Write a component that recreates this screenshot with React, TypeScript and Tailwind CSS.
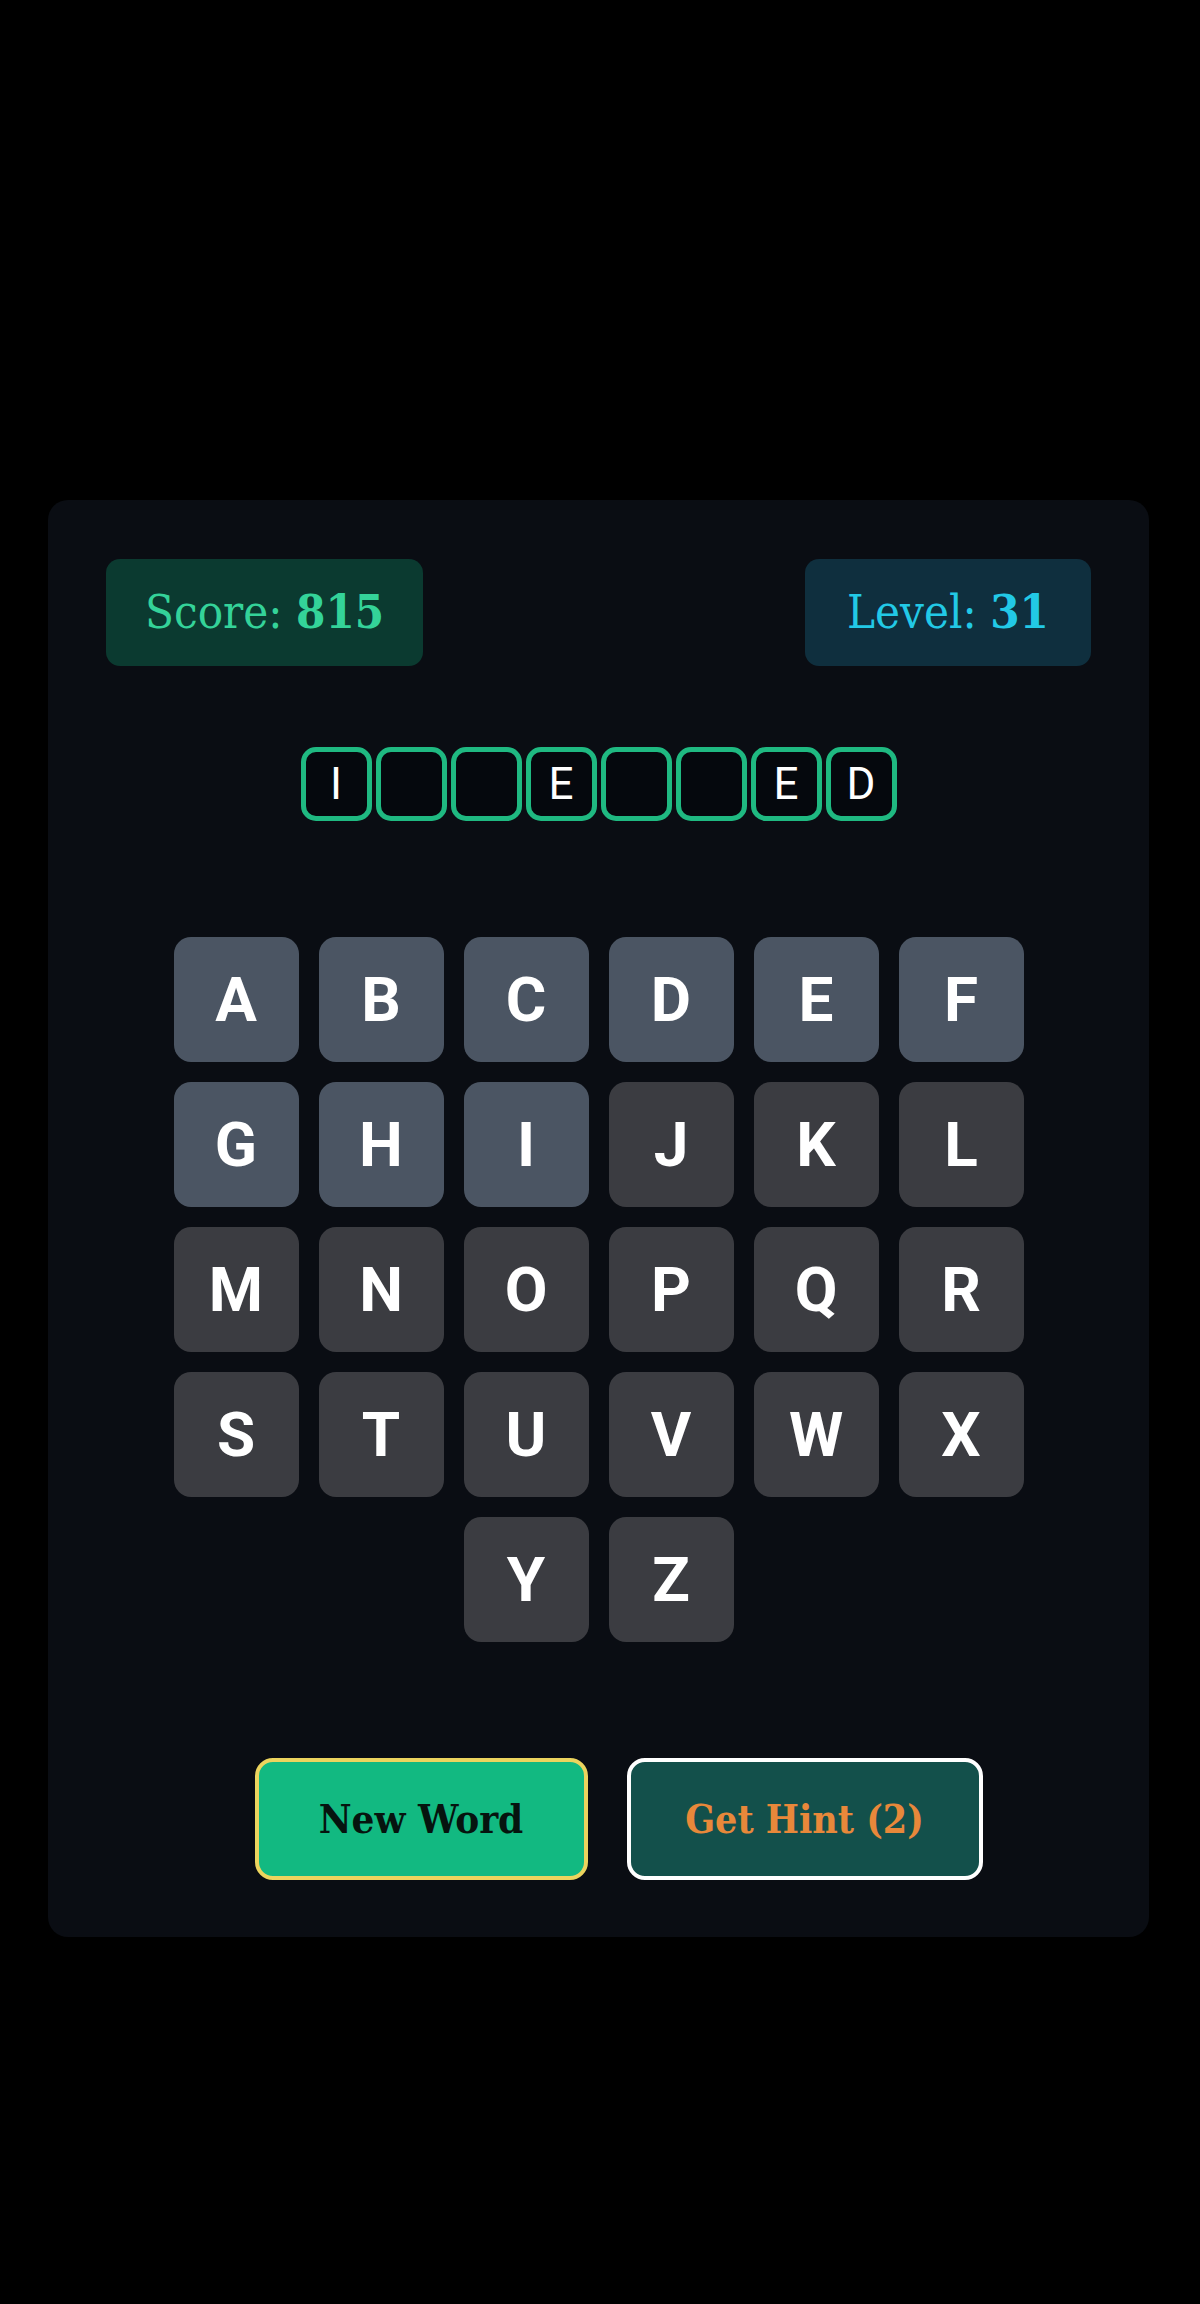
const WORD = ['I', '', '', 'E', '', '', 'E', 'D'];
const LETTERS = 'ABCDEFGHIJKLMNOPQRSTUVWXYZ'.split('');
// letters already tried show the lighter key colour
const USED = new Set(['A', 'B', 'C', 'D', 'E', 'F', 'G', 'H', 'I']);

const serif = { fontFamily: '"DejaVu Serif Condensed", "DejaVu Serif", serif' };

export default function App() {
  return (
    <div className="min-h-screen w-full bg-black pt-[500px] pb-[367px]">
      <div className="ml-[48px] w-[1101px] rounded-[20px] bg-[#0a0d13] px-[58px] pt-[59px] pb-[57px]">
        {/* Score / level */}
        <div className="flex items-center justify-between" style={serif}>
          <div className="flex h-[107px] items-center rounded-[14px] bg-[#0b3a30] px-[39px] text-[47px] text-[#34d399]">
            <span>Score:&nbsp;</span>
            <span className="font-bold">815</span>
          </div>
          <div className="flex h-[107px] items-center rounded-[14px] bg-[#0f2f3e] px-[42px] text-[47px] text-[#22c9e6]">
            <span>Level:&nbsp;</span>
            <span className="font-bold">31</span>
          </div>
        </div>

        {/* Word */}
        <div className="mt-[81px] flex justify-center gap-[4px]">
          {WORD.map((ch, i) => (
            <div
              key={i}
              className="flex h-[74px] w-[71px] items-center justify-center rounded-[15px] border-[5px] border-[#1fb981] bg-[#05080d] text-[44px] text-white"
              style={{ fontFamily: 'Roboto, "Liberation Sans", sans-serif' }}
            >
              {ch}
            </div>
          ))}
        </div>

        {/* Keyboard */}
        <div className="mt-[116px] flex justify-center">
          <div className="flex w-[850px] flex-wrap justify-center gap-[20px]">
            {LETTERS.map((l) => (
              <button
                key={l}
                className={`flex h-[125px] w-[125px] items-center justify-center rounded-[17px] text-[62px] font-bold text-white ${
                  USED.has(l) ? 'bg-[#4b5563]' : 'bg-[#3b3c41]'
                }`}
                style={{ fontFamily: 'Roboto, "Liberation Sans", sans-serif' }}
              >
                {l}
              </button>
            ))}
          </div>
        </div>

        {/* Actions */}
        <div className="mt-[116px] flex justify-center gap-[39px] pl-[40px]" style={serif}>
          <button className="flex h-[122px] w-[333px] items-center justify-center rounded-[18px] border-[4px] border-[#ecd45e] bg-[#12b981] text-[40px] font-bold text-[#06140f]">
            New Word
          </button>
          <button className="flex h-[122px] w-[356px] items-center justify-center rounded-[18px] border-[4px] border-white bg-[#13504b] text-[39px] font-bold text-[#e8883a]">
            Get Hint (2)
          </button>
        </div>
      </div>
    </div>
  );
}
